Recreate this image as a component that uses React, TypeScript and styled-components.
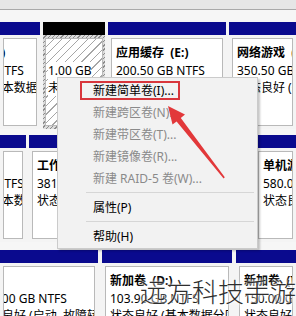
import React from 'react';
import styled, { createGlobalStyle } from 'styled-components';

type Part = {
  w?: number;
  free?: boolean;
  title?: string;
  lines: string[];
  shift?: number;
};

type Row = { parts: Part[]; gap: number };

const rows: Row[] = [
  {
    gap: 3,
    parts: [
      { w: 40, title: '本地磁盘 (C:)', lines: ['119.51 GB NTFS', '状态良好 (基本数据分区)'], shift: 73 },
      { w: 62, free: true, lines: ['1.00 GB', '未分配'] },
      { w: 118, title: '应用缓存  (E:)', lines: ['200.50 GB NTFS', '状态良好 (基本数据分区)'] },
      { title: '网络游戏  (F:)', lines: ['350.50 GB NTFS', '状态良好 (基本数据分区)'] },
    ],
  },
  {
    gap: 3,
    parts: [
      { w: 26, title: '系统保留', lines: ['119.51 GB NTFS', '状态良好 (基本数据分区)'], shift: 73 },
      { w: 223, title: '工作  (G:)', lines: ['381.00 GB NTFS', '状态良好 (基本数据分区)'] },
      { title: '单机游戏  (H:)', lines: ['580.00 GB NTFS', '状态良好 (基本数据分区)'] },
    ],
  },
  {
    gap: 4,
    parts: [
      { w: 98, title: '  (C:)', lines: ['100.00 GB NTFS', '状态良好 (启动, 故障转储, 基本数据分区)'], shift: 30 },
      { w: 130, title: '新加卷  (D:)', lines: ['103.90 GB NTFS', '状态良好 (基本数据分区)'] },
      { title: '新加卷  (I:)', lines: ['150.00 GB NTFS', '状态良好 (基本数据分区)'] },
    ],
  },
];

const menuItems = [
  { label: '新建简单卷(I)...', boxed: true },
  { label: '新建跨区卷(N)...', disabled: true },
  { label: '新建带区卷(T)...', disabled: true },
  { label: '新建镜像卷(R)...', disabled: true },
  { label: '新建 RAID-5 卷(W)...', disabled: true },
  { sep: true },
  { label: '属性(P)' },
  { sep: true },
  { label: '帮助(H)' },
];

export default function App() {
  return (
    <Page>
      <GlobalStyle />
      <TopEdge />
      <RowGap $h={12} />
      {rows.map((row, i) => (
        <React.Fragment key={i}>
          <DiskRow $gap={row.gap}>
            {row.parts.map((p, j) => (
              <Partition key={j} $w={p.w}>
                <PartHeader $free={p.free} />
                <PartBody $free={p.free}>
                  <PartInner $free={p.free}>
                    <Content $shift={p.shift ?? 0}>
                      <Title>{p.title ?? '\u00a0'}</Title>
                      {p.lines.map((l) => (
                        <Line key={l}>
                          <span>{l}</span>
                        </Line>
                      ))}
                    </Content>
                  </PartInner>
                </PartBody>
              </Partition>
            ))}
          </DiskRow>
          {i === 0 && <RowGap $h={6} />}
          {i === 1 && <RowGap $h={8} />}
        </React.Fragment>
      ))}

      <Watermark>远方科技手游</Watermark>

      <Menu>
        {menuItems.map((m, i) =>
          m.sep ? (
            <MenuSep key={i} />
          ) : (
            <MenuItem key={i} $disabled={m.disabled}>
              <MenuLabel $boxed={m.boxed}>{m.label}</MenuLabel>
            </MenuItem>
          )
        )}
      </Menu>

      <Arrow viewBox="0 0 296 316" width="296" height="316">
        <polygon
          points="168,106 185,114.5 180.8,118 224.8,177.2 223.6,178.6 176.6,121.4 172.5,124.5"
          fill="#e2383a"
        />
      </Arrow>
    </Page>
  );
}

const GlobalStyle = createGlobalStyle`
  html, body {
    margin: 0;
    padding: 0;
    background: #f4f4f4;
  }
  body {
    font-family: "Noto Sans", "Noto Sans CJK SC", sans-serif;
  }
`;

const Page = styled.div`
  position: relative;
  width: 296px;
  height: 316px;
  overflow: hidden;
  background: #f4f4f4;
  font-size: 12px;
  color: #000;
`;

const TopEdge = styled.div`
  height: 9px;
  background: #e6e6e6;
  border-bottom: 1px solid #a9a9a9;
`;

const RowGap = styled.div<{ $h: number }>`
  height: ${(p) => p.$h}px;
  background: #f6f6f6;
`;

const DiskRow = styled.div<{ $gap: number }>`
  display: flex;
  gap: ${(p) => p.$gap}px;
  height: 107px;
  background: #f4f4f4;
`;

const Partition = styled.div<{ $w?: number }>`
  display: flex;
  flex-direction: column;
  ${(p) => (p.$w ? `width: ${p.$w}px; flex: none;` : 'flex: 1; min-width: 0;')}
`;

const PartHeader = styled.div<{ $free?: boolean }>`
  height: 13px;
  flex: none;
  background: ${(p) => (p.$free ? '#000000' : '#0a0a8e')};
`;

const hatch = (line: string, bg: string, step: number) =>
  `repeating-linear-gradient(135deg, ${bg} 0px, ${bg} ${step - 1}px, ${line} ${step - 1}px, ${line} ${step}px)`;

const PartBody = styled.div<{ $free?: boolean }>`
  flex: 1;
  display: flex;
  padding: ${(p) => (p.$free ? '3px 2px' : '3px')};
  background: ${(p) => (p.$free ? hatch('#8c8c8c', '#dcdcdc', 3) : '#f4f4f4')};
`;

const PartInner = styled.div<{ $free?: boolean }>`
  flex: 1;
  min-width: 0;
  overflow: hidden;
  border: 1px solid #b9b9b9;
  background: ${(p) => (p.$free ? hatch('#a6a6a6', '#ffffff', 6) : '#ffffff')};
  padding: 5px 0 0 ${(p) => (p.$free ? 2 : 4)}px;
`;

const Content = styled.div<{ $shift: number }>`
  margin-left: ${(p) => -p.$shift}px;
  white-space: pre;
`;

const Title = styled.div`
  font-weight: 700;
  line-height: 17.5px;
`;

const Line = styled.div`
  line-height: 17px;
  span {
    background: #fff;
  }
`;

const Watermark = styled.div`
  position: absolute;
  left: 140px;
  top: 276px;
  font-family: "Noto Sans CJK SC", sans-serif;
  font-size: 26px;
  font-weight: 300;
  line-height: 30px;
  color: #2e2e2e;
  white-space: nowrap;
  text-shadow: 0 0 2px #fff, 0 0 4px #fff, 0 0 6px rgba(255, 255, 255, 0.9);
`;

const Menu = styled.div`
  position: absolute;
  left: 57px;
  top: 77px;
  width: 199px;
  padding: 1px 0;
  background: #f2f2f2;
  border: 1px solid #cbcbcb;
  box-shadow: 2px 2px 2px rgba(0, 0, 0, 0.22);
`;

const MenuItem = styled.div<{ $disabled?: boolean }>`
  height: 22px;
  display: flex;
  align-items: center;
  padding-left: 35px;
  color: ${(p) => (p.$disabled ? '#8a8a8a' : '#000')};
  white-space: nowrap;
`;

const MenuLabel = styled.span<{ $boxed?: boolean }>`
  ${(p) =>
    p.$boxed
      ? `
    border: 2px solid #d8363c;
    margin-left: -13px;
    padding: 0 4px 0 11px;
    line-height: 15px;
  `
      : ''}
`;

const MenuSep = styled.div`
  height: 7px;
  display: flex;
  align-items: center;
  padding-left: 28px;
  padding-right: 3px;
  &::after {
    content: '';
    flex: 1;
    height: 1px;
    background: #d6d6d6;
  }
`;

const Arrow = styled.svg`
  position: absolute;
  left: 0;
  top: 0;
  pointer-events: none;
`;
